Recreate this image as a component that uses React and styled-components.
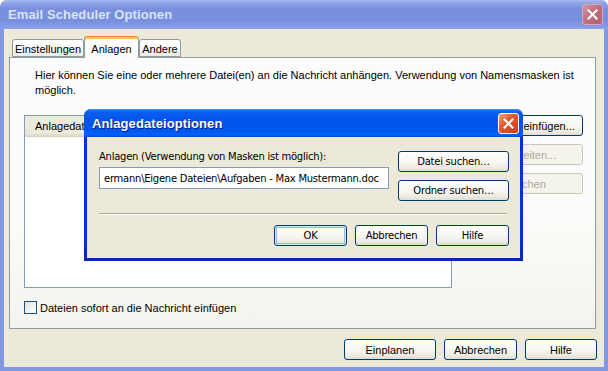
import React from 'react';
import styled, { createGlobalStyle, css } from 'styled-components';

const GlobalStyle = createGlobalStyle`
  html, body {
    margin: 0;
    padding: 0;
    background: #ffffff;
  }
  body {
    font-family: "Liberation Sans", Arial, sans-serif;
    font-size: 11px;
    color: #000;
  }
  * {
    box-sizing: border-box;
  }
`;

const inactiveTitle = `linear-gradient(180deg, #a9bbf1 0%, #8fa5e9 10%, #7a90df 30%, #788ede 70%, #859be5 92%, #8ea3e8 100%)`;
const activeTitle = `linear-gradient(180deg, #3d95ff 0%, #0a5ff0 10%, #0054e8 40%, #0059ef 80%, #0062f7 92%, #0046d8 100%)`;

const Window = styled.div`
  position: relative;
  width: 608px;
  height: 371px;
  display: flex;
  flex-direction: column;
  background: #8398e3;
  border-radius: 7px 7px 0 0;
  overflow: hidden;
`;

const TitleBar = styled.div`
  flex: none;
  height: ${p => (p.$active ? 28 : 29)}px;
  display: flex;
  align-items: center;
  justify-content: space-between;
  padding: 0 ${p => (p.$active ? 4 : 5)}px 0 8px;
  background: ${p => (p.$active ? activeTitle : inactiveTitle)};
  border-radius: 7px 7px 0 0;
`;

const TitleText = styled.span`
  font: bold 13px "Liberation Sans", Arial, sans-serif;
  color: ${p => (p.$active ? '#ffffff' : '#d8e4f8')};
  text-shadow: ${p => (p.$active ? '1px 1px 0 #0a1883' : 'none')};
  letter-spacing: 0.1px;
`;

const CloseButton = styled.div`
  width: 21px;
  height: 21px;
  display: flex;
  align-items: center;
  justify-content: center;
  border-radius: 3px;
  ${p =>
    p.$active
      ? css`
          border: 1px solid #ffffff;
          background: linear-gradient(135deg, #f0a080 0%, #e2592f 40%, #cf3a12 100%);
        `
      : css`
          border: 1px solid #d7a6b6;
          background: linear-gradient(135deg, #d29aa8 0%, #c0707f 45%, #b4606f 100%);
        `}
`;

const ClientArea = styled.div`
  flex: 1;
  margin: 0 4px 4px 4px;
  background: #ece9d8;
  display: flex;
  flex-direction: column;
  padding: 7px 8px 7px 5px;
`;

const TabStrip = styled.div`
  display: flex;
  align-items: flex-end;
  height: 21px;
  padding-left: 3px;
  position: relative;
  z-index: 2;
`;

const Tab = styled.div`
  width: ${p => p.$w}px;
  height: ${p => (p.$active ? 22 : 18)}px;
  margin-bottom: ${p => (p.$active ? -1 : 0)}px;
  display: flex;
  align-items: center;
  justify-content: center;
  padding-top: ${p => (p.$active ? 2 : 1)}px;
  border: 1px solid #919b9c;
  border-bottom: ${p => (p.$active ? 'none' : '1px solid #919b9c')};
  border-radius: 3px 3px 0 0;
  font-size: 11px;
  ${p =>
    p.$active
      ? css`
          background: #fcfcfe;
          border-top: 1px solid #e68b2c;
          box-shadow: inset 0 2px 0 #ffc73c;
        `
      : css`
          background: linear-gradient(180deg, #ffffff 0%, #f7f7f3 60%, #ecebe6 100%);
        `}
`;

const Panel = styled.div`
  flex: 1;
  border: 1px solid #919b9c;
  background: linear-gradient(180deg, #fcfcfe 0%, #fbfbf9 60%, #f4f3ee 100%);
  padding: 10px 12px 0 14px;
  display: flex;
  flex-direction: column;
`;

const Intro = styled.p`
  margin: 0 0 0 11px;
  line-height: 15px;
  white-space: nowrap;
`;

const MiddleRow = styled.div`
  display: flex;
  margin-top: 17px;
  gap: 15px;
`;

const ListBox = styled.div`
  width: 428px;
  height: 173px;
  border: 1px solid #7f9db9;
  background: #ffffff;
`;

const ListHeader = styled.div`
  display: flex;
  height: 21px;
  background: #ebeadb;
  border-bottom: 1px solid #d6d2c2;
  box-shadow: inset 0 -2px 0 #e2decd;
`;

const HeaderCell = styled.div`
  width: ${p => p.$w}px;
  padding-left: 10px;
  display: flex;
  align-items: center;
  border-right: 1px solid #d6d2c2;
`;

const ButtonColumn = styled.div`
  display: flex;
  flex-direction: column;
  gap: ${p => p.$gap}px;
  margin-top: ${p => p.$top || 0}px;
`;

const Button = styled.button`
  width: ${p => p.$w}px;
  height: 21px;
  padding: 0;
  border: 1px solid #003c74;
  border-radius: 3px;
  background: linear-gradient(180deg, #ffffff 0%, #f7f6f1 55%, #ebe9df 85%, #dedcd0 100%);
  font-family: ${p => (p.$tahoma ? '"DejaVu Sans", Verdana, sans-serif' : '"Liberation Sans", Arial, sans-serif')};
  font-size: ${p => (p.$tahoma ? '10px' : '11px')};
  letter-spacing: ${p => (p.$tahoma ? '-0.25px' : 'normal')};
  color: #000;
  white-space: nowrap;
  overflow: hidden;
  ${p =>
    p.$default &&
    css`
      box-shadow: inset 0 0 0 1px #cee7ff, inset 0 0 0 2px #98b8ea;
    `}
  &:disabled {
    border-color: #c9c7ba;
    color: #aca899;
    background: #f5f4ea;
  }
`;

const CheckRow = styled.label`
  display: flex;
  align-items: center;
  gap: 3px;
  margin-top: 13px;
`;

const CheckBox = styled.span`
  width: 13px;
  height: 13px;
  border: 1px solid #1c5180;
  background: linear-gradient(135deg, #dcdcd7 0%, #f4f4f2 60%, #ffffff 100%);
`;

const FooterButtons = styled.div`
  display: flex;
  justify-content: flex-end;
  margin: 10px -1px 0 0;
  gap: 8px;
`;

/* the modal child dialog floats over the main window */
const Modal = styled.div`
  position: absolute;
  left: 84px;
  top: 109px;
  width: 439px;
  height: 152px;
  display: flex;
  flex-direction: column;
  background: linear-gradient(180deg, #0831d9 0%, #0831d9 85%, #0a24b0 100%);
  border-radius: 7px 7px 0 0;
  z-index: 5;
`;

const ModalBody = styled.div`
  flex: 1;
  margin: 0 3px 3px 3px;
  background: #ece9d8;
  padding: 13px 11px 12px 12px;
  display: flex;
  flex-direction: column;
  font-family: "DejaVu Sans", Verdana, sans-serif;
  font-size: 10px;
  letter-spacing: -0.25px;
`;

const ModalRow = styled.div`
  display: flex;
  gap: 9px;
`;

const FieldColumn = styled.div`
  width: 290px;
  display: flex;
  flex-direction: column;
`;

const FieldLabel = styled.div`
  height: 13px;
  line-height: 13px;
  margin-bottom: 4px;
`;

const TextInput = styled.div`
  height: 22px;
  border: 1px solid #7f9db9;
  background: #ffffff;
  padding: 0 0 0 4px;
  display: flex;
  align-items: center;
  white-space: nowrap;
  overflow: hidden;
`;

const Separator = styled.div`
  margin-top: 12px;
  height: 2px;
  border-top: 1px solid #aca899;
  border-bottom: 1px solid #ffffff;
  width: 408px;
`;

const ModalButtons = styled.div`
  display: flex;
  justify-content: flex-end;
  gap: 8px;
  margin-top: 10px;
`;

const CloseX = () => (
  <svg width="11" height="11" viewBox="0 0 11 11">
    <path d="M1.5 1.5 L9.5 9.5 M9.5 1.5 L1.5 9.5" stroke="#ffffff" strokeWidth="2" strokeLinecap="square" />
  </svg>
);

export default function App() {
  return (
    <>
      <GlobalStyle />
      <Window>
        <TitleBar>
          <TitleText>Email Scheduler Optionen</TitleText>
          <CloseButton>
            <CloseX />
          </CloseButton>
        </TitleBar>
        <ClientArea>
          <TabStrip>
            <Tab $w={72}>Einstellungen</Tab>
            <Tab $w={55} $active>Anlagen</Tab>
            <Tab $w={42}>Andere</Tab>
          </TabStrip>
          <Panel>
            <Intro>
              Hier können Sie eine oder mehrere Datei(en) an die Nachricht anhängen. Verwendung von Namensmasken ist
              <br />
              möglich.
            </Intro>
            <MiddleRow>
              <ListBox>
                <ListHeader>
                  <HeaderCell $w={220}>Anlagedatei</HeaderCell>
                </ListHeader>
              </ListBox>
              <ButtonColumn $gap={8}>
                <Button $w={116}>Datei(en) einfügen...</Button>
                <Button $w={116} disabled>Bearbeiten...</Button>
                <Button $w={116} disabled>Löschen</Button>
              </ButtonColumn>
            </MiddleRow>
            <CheckRow>
              <CheckBox />
              Dateien sofort an die Nachricht einfügen
            </CheckRow>
          </Panel>
          <FooterButtons>
            <Button $w={92}>Einplanen</Button>
            <Button $w={73}>Abbrechen</Button>
            <Button $w={72}>Hilfe</Button>
          </FooterButtons>
        </ClientArea>

        <Modal>
          <TitleBar $active>
            <TitleText $active>Anlagedateioptionen</TitleText>
            <CloseButton $active>
              <CloseX />
            </CloseButton>
          </TitleBar>
          <ModalBody>
            <ModalRow>
              <FieldColumn>
                <FieldLabel>Anlagen (Verwendung von Masken ist möglich):</FieldLabel>
                <TextInput>ermann\Eigene Dateien\Aufgaben - Max Mustermann.doc</TextInput>
              </FieldColumn>
              <ButtonColumn $gap={8} $top={1}>
                <Button $w={111} $tahoma>Datei suchen…</Button>
                <Button $w={111} $tahoma>Ordner suchen…</Button>
              </ButtonColumn>
            </ModalRow>
            <Separator />
            <ModalButtons>
              <Button $w={73} $tahoma $default>OK</Button>
              <Button $w={73} $tahoma>Abbrechen</Button>
              <Button $w={73} $tahoma>Hilfe</Button>
            </ModalButtons>
          </ModalBody>
        </Modal>
      </Window>
    </>
  );
}
